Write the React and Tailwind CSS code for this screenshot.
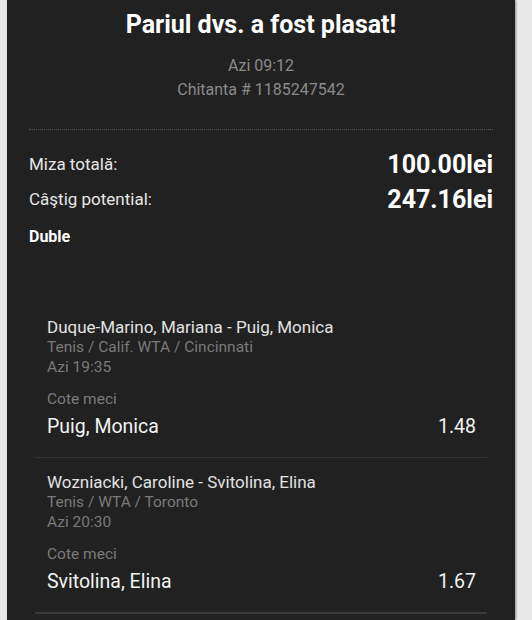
export default function App() {
  const matches = [
    {
      name: "Duque-Marino, Mariana - Puig, Monica",
      league: "Tenis / Calif. WTA / Cincinnati",
      time: "Azi 19:35",
      pick: "Puig, Monica",
      odd: "1.48",
    },
    {
      name: "Wozniacki, Caroline - Svitolina, Elina",
      league: "Tenis / WTA / Toronto",
      time: "Azi 20:30",
      pick: "Svitolina, Elina",
      odd: "1.67",
    },
  ];
  return (
    <div className="min-h-[620px] bg-[#e8e8e8] pl-[7px] pr-[17px] font-['Roboto',sans-serif]">
      <div className="min-h-[620px] bg-[#212121] px-[22px] pt-[9px] shadow-[1px_0_2px_rgba(0,0,0,0.4)]">
        <div className="text-center">
          <div className="text-[25px] leading-[32px] font-bold text-white">Pariul dvs. a fost plasat!</div>
          <div className="mt-[13px] text-[16px] leading-[24px] text-[#8a8a8a]">Azi 09:12</div>
          <div className="text-[16px] leading-[24px] text-[#8a8a8a]">Chitanta # 1185247542</div>
        </div>
        <div className="mt-[27px] border-t border-dotted border-[#555]" />
        <div className="mt-[17px] flex h-[35px] items-center justify-between">
          <span className="text-[17px] text-[#e6e6e6]">Miza totală:</span>
          <span className="text-[25px] font-bold text-white">100.00lei</span>
        </div>
        <div className="flex h-[35px] items-center justify-between">
          <span className="text-[17px] text-[#e6e6e6]">Câştig potential:</span>
          <span className="text-[25px] font-bold text-white">247.16lei</span>
        </div>
        <div className="mt-[8px] text-[16px] leading-[24px] font-bold text-white">Duble</div>
        <div className="mx-[6px] mt-[68px]">
          {matches.map((m, i) => (
            <div
              key={i}
              className={
                i === 0
                  ? "border-b border-[#343434] pl-[12px] pr-[11px] pb-[16px]"
                  : "border-b-2 border-[#3a3a3a] pl-[12px] pr-[11px] pt-[14px] pb-[16px]"
              }
            >
              <div className="text-[17px] leading-[20px] text-[#e2e2e2]">{m.name}</div>
              <div className="text-[15.5px] leading-[20px] text-[#7a7a7a]">{m.league}</div>
              <div className="text-[15.5px] leading-[20px] text-[#7a7a7a]">{m.time}</div>
              <div className="mt-[12px] text-[15.5px] leading-[20px] text-[#7a7a7a]">Cote meci</div>
              <div className="mt-[4px] flex items-center justify-between text-[19.5px] leading-[28px] text-[#f2f2f2]">
                <span>{m.pick}</span>
                <span>{m.odd}</span>
              </div>
            </div>
          ))}
        </div>
      </div>
    </div>
  );
}
